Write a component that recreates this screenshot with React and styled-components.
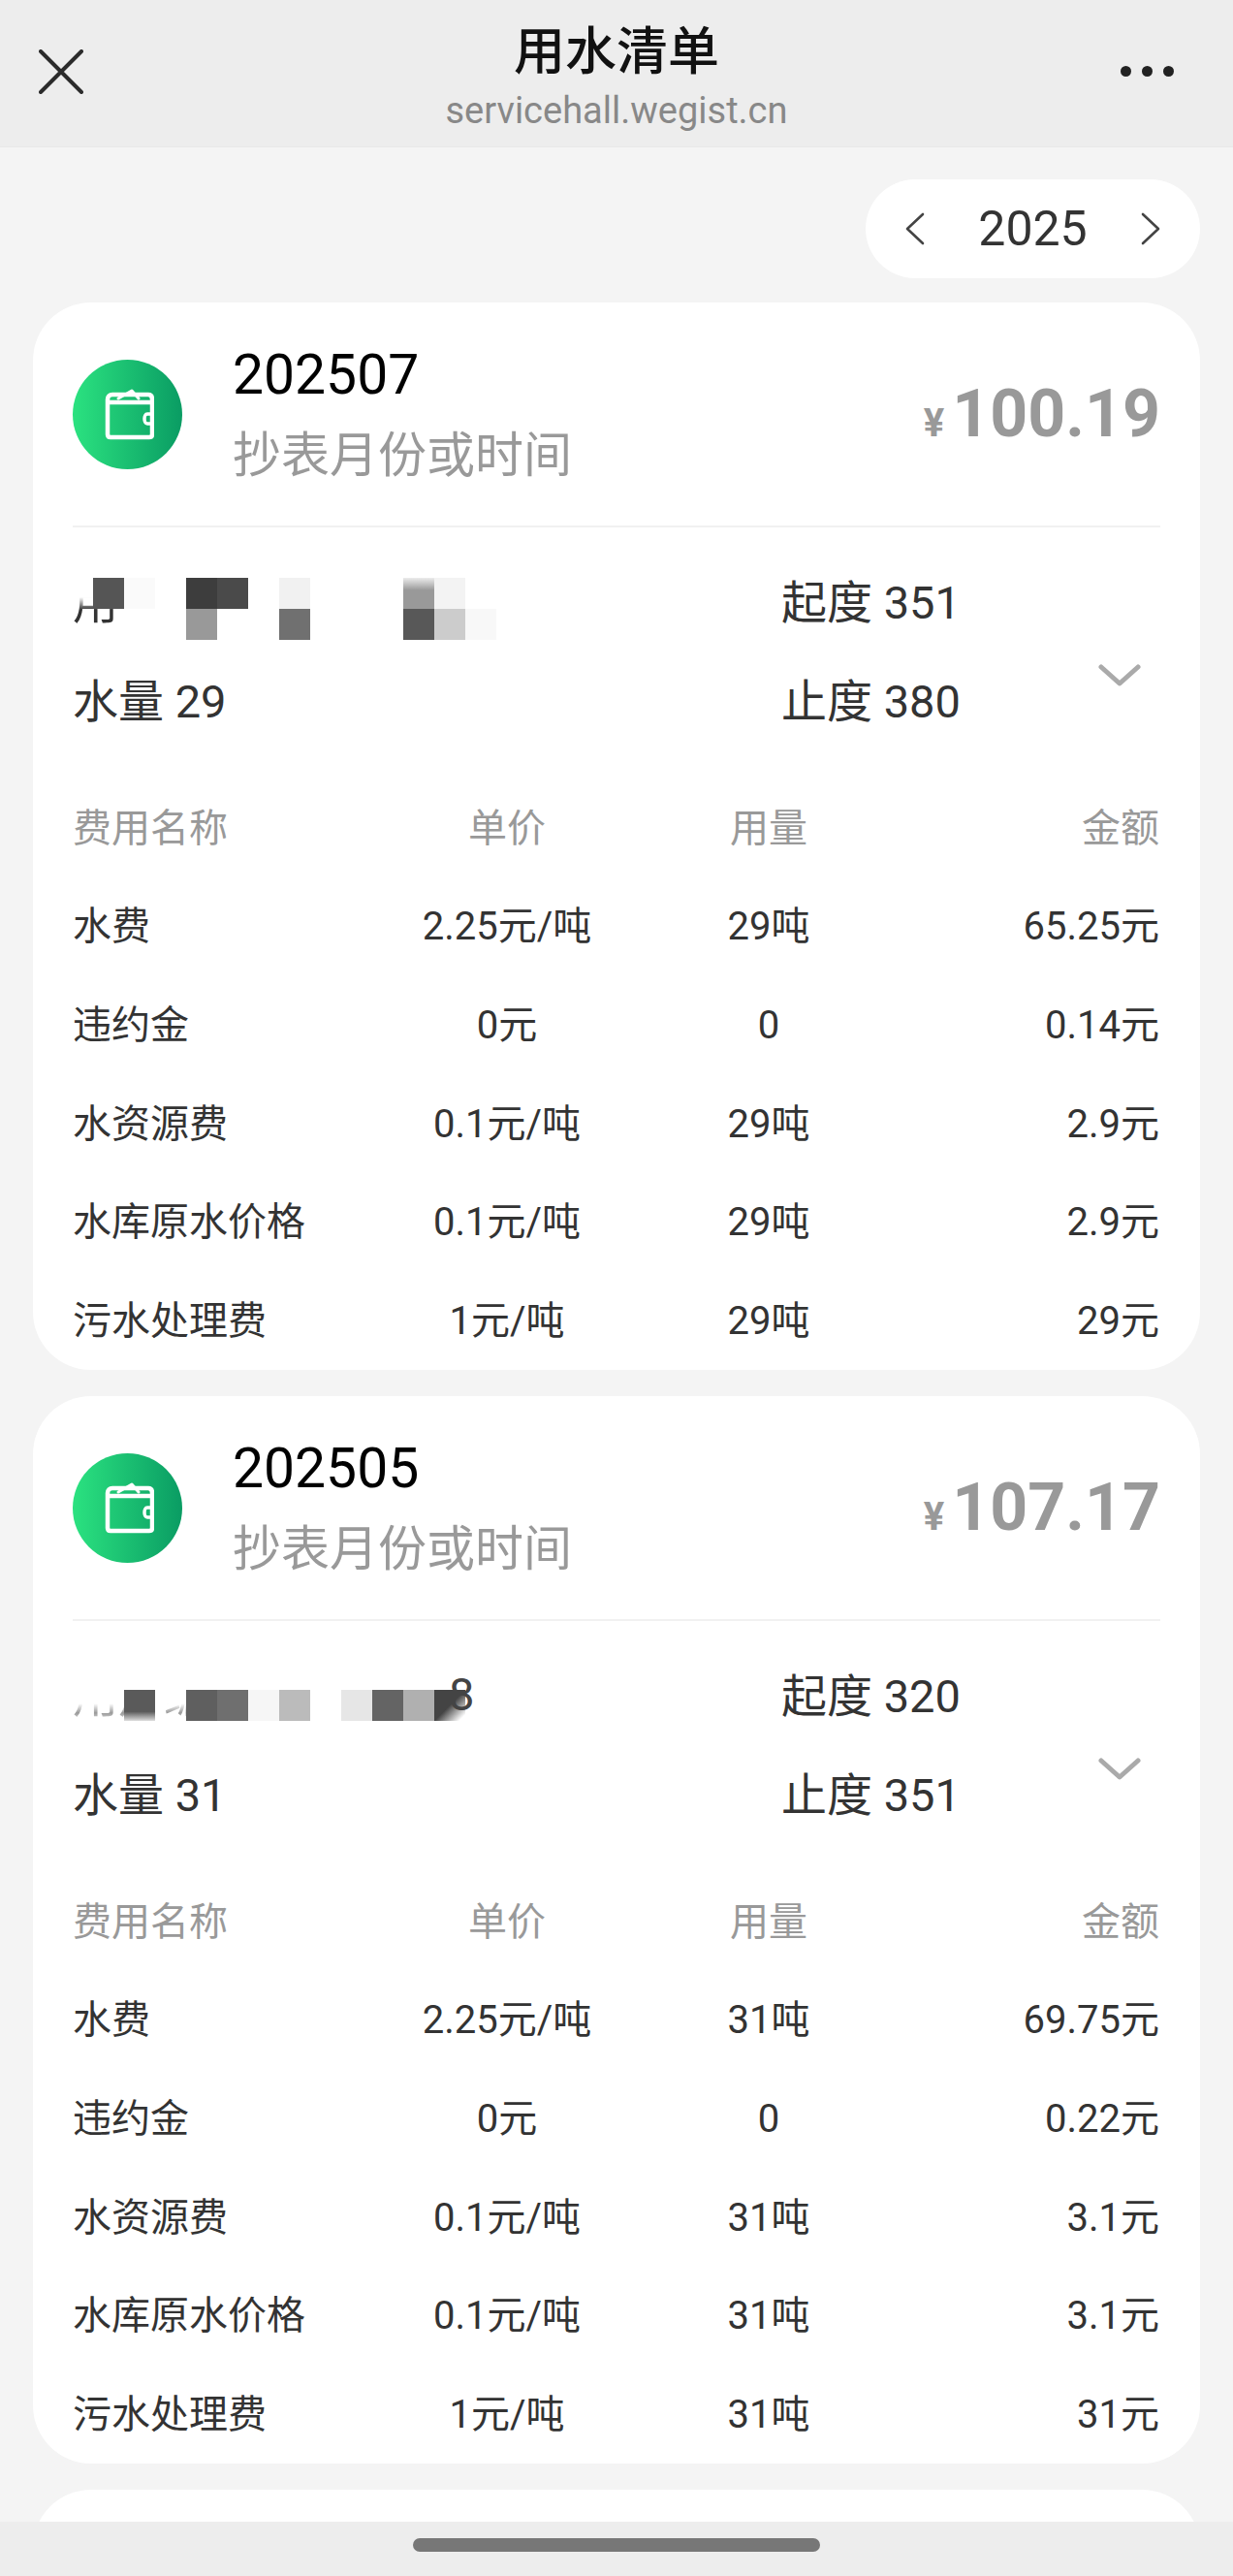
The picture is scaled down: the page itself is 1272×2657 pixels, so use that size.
import styled, { createGlobalStyle } from 'styled-components';

const GlobalStyle = createGlobalStyle`
  html, body {
    margin: 0;
    padding: 0;
    background: #f4f4f4;
  }
`;

const bills = [
  {
    month: '202507',
    total: '100.19',
    water: 29,
    start: 351,
    end: 380,
    cover: 'top',
    trail: '',
    cells: [
      '#555', '#fafafa', '', '#3d3d3d', '#4a4a4a', '', '#f1f1f1', '', '', '', 'linear-gradient(#ececec, #999 40%)', '#f3f3f3', '',
      '', '', '', '#999', '', '', '#707070', '', '', '', '#585858', '#ccc', '#f8f8f8',
    ],
    rows: [
      ['水费', '2.25元/吨', '29吨', '65.25元'],
      ['违约金', '0元', '0', '0.14元'],
      ['水资源费', '0.1元/吨', '29吨', '2.9元'],
      ['水库原水价格', '0.1元/吨', '29吨', '2.9元'],
      ['污水处理费', '1元/吨', '29吨', '29元'],
    ],
  },
  {
    month: '202505',
    total: '107.17',
    water: 31,
    start: 320,
    end: 351,
    cover: 'bottom',
    trail: '8',
    cells: [
      '', 'linear-gradient(#5a5a5a 70%, #ddd)', '', '#5f5f5f', '#6f6f6f', '#f6f6f6', '#bbb', '', '#e6e6e6', '#646464', '#b0b0b0', 'linear-gradient(135deg, #444 50%, #fff 90%)', '',
    ],
    rows: [
      ['水费', '2.25元/吨', '31吨', '69.75元'],
      ['违约金', '0元', '0', '0.22元'],
      ['水资源费', '0.1元/吨', '31吨', '3.1元'],
      ['水库原水价格', '0.1元/吨', '31吨', '3.1元'],
      ['污水处理费', '1元/吨', '31吨', '31元'],
    ],
  },
];

function CloseIcon() {
  return (
    <svg width="46" height="46" viewBox="0 0 46 46" fill="none" stroke="#2b2b2b" strokeWidth="4" strokeLinecap="round">
      <path d="M2 2 L44 44 M44 2 L2 44" />
    </svg>
  );
}

function WalletIcon() {
  return (
    <svg width="54" height="54" viewBox="-2 0 54 54" fill="none" stroke="#fff" strokeWidth="4.5" strokeLinejoin="round" strokeLinecap="round">
      <path d="M4 12 C4 9 6 7 9 7 L46 7 C49 7 50 9 50 12 L50 48 C50 50 49 51 47 51 L7 51 C5 51 4 50 4 48 Z" />
      <path d="M5 15 L50 15" />
      <path d="M15 11 L29 3 L36 11" strokeWidth="3" />
      <path d="M50 27 L45 27 C41 27 41 37 45 37 L50 37" strokeWidth="3.5" />
    </svg>
  );
}

// year arrows are tall and thin, no icon in the packages has that shape
function YearArrow({ dir }) {
  return (
    <svg width="22" height="34" viewBox="0 0 22 34" fill="none" stroke="#444" strokeWidth="2.6" strokeLinecap="round" strokeLinejoin="round">
      <path d={dir === 'left' ? 'M19 2 L3 17 L19 32' : 'M3 2 L19 17 L3 32'} />
    </svg>
  );
}

function ExpandArrow() {
  return (
    <svg width="44" height="26" viewBox="0 0 44 26" fill="none" stroke="#aaa" strokeWidth="5" strokeLinecap="round" strokeLinejoin="round">
      <path d="M3 4 L22 21 L41 4" />
    </svg>
  );
}

export default function App() {
  return (
    <Page>
      <GlobalStyle />
      <NavBar>
        <NavClose><CloseIcon /></NavClose>
        <NavTitle>用水清单</NavTitle>
        <NavHost>servicehall.wegist.cn</NavHost>
        <NavMore><Dot /><Dot /><Dot /></NavMore>
      </NavBar>

      <YearRow>
        <YearPill>
          <YearArrow dir="left" />
          <YearText>2025</YearText>
          <YearArrow dir="right" />
        </YearPill>
      </YearRow>

      <CardList>
        {bills.map((bill) => (
          <Card key={bill.month}>
            <CardHead>
              <IconCircle><WalletIcon /></IconCircle>
              <HeadText>
                <Month>{bill.month}</Month>
                <MonthLabel>抄表月份或时间</MonthLabel>
              </HeadText>
              <Total>
                <Yen>¥</Yen>
                {bill.total}
              </Total>
            </CardHead>

            <Meter>
              <MeterCell>
                <Hidden $cover={bill.cover}>{bill.cover === 'top' ? '用' : '用户编号'}</Hidden>
                <Mosaic $cover={bill.cover}>
                  {bill.cells.map((c, i) => <MosaicCell key={i} $c={c} />)}
                </Mosaic>
                {bill.trail && <Trail>{bill.trail}</Trail>}
              </MeterCell>
              <MeterCell>起度 {bill.start}</MeterCell>
              <MeterCell>水量 {bill.water}</MeterCell>
              <MeterCell>止度 {bill.end}</MeterCell>
              <Expand><ExpandArrow /></Expand>
            </Meter>

            <FeeTable>
              <FeeHead>费用名称</FeeHead>
              <FeeHead $center>单价</FeeHead>
              <FeeHead $center>用量</FeeHead>
              <FeeHead $right>金额</FeeHead>
              {bill.rows.map((r) => (
                <FeeRow key={r[0]}>
                  <FeeCell>{r[0]}</FeeCell>
                  <FeeCell $center>{r[1]}</FeeCell>
                  <FeeCell $center>{r[2]}</FeeCell>
                  <FeeCell $right>{r[3]}</FeeCell>
                </FeeRow>
              ))}
            </FeeTable>
          </Card>
        ))}
        <Card />
      </CardList>

      <HomeBar>
        <HomeHandle />
      </HomeBar>
    </Page>
  );
}

const Page = styled.div`
  position: relative;
  width: 1272px;
  height: 2657px;
  overflow: hidden;
  background: #f4f4f4;
  font-family: Roboto, 'Noto Sans CJK SC', sans-serif;
  color: #333;
`;
const NavBar = styled.header`
  position: relative;
  height: 152px;
  background: #ededed;
  border-bottom: 1px solid #e8e8e8;
  box-sizing: border-box;
  text-align: center;
`;
const NavClose = styled.div`
  position: absolute;
  left: 40px;
  top: 51px;
  line-height: 0;
`;
const NavTitle = styled.div`
  padding-top: 22px;
  font-size: 53px;
  line-height: 64px;
  font-weight: 500;
  color: #111;
`;
const NavHost = styled.div`
  margin-top: 6px;
  font-size: 38px;
  line-height: 44px;
  color: #888;
`;
const NavMore = styled.div`
  position: absolute;
  right: 61px;
  top: 68px;
  display: flex;
  gap: 11px;
`;
const Dot = styled.span`
  width: 11px;
  height: 11px;
  border-radius: 50%;
  background: #222;
`;
const YearRow = styled.div`
  display: flex;
  justify-content: flex-end;
  padding: 33px 34px 25px 0;
`;
const YearPill = styled.div`
  width: 345px;
  height: 102px;
  box-sizing: border-box;
  padding: 0 40px;
  display: flex;
  align-items: center;
  justify-content: space-between;
  background: #fff;
  border-radius: 51px;
`;
const YearText = styled.span`
  font-size: 50px;
  line-height: 60px;
  color: #333;
`;
const CardList = styled.div`
  display: flex;
  flex-direction: column;
  gap: 27px;
  padding: 0 34px;
`;
const Card = styled.section`
  height: 1101px;
  flex: none;
  box-sizing: border-box;
  padding: 0 41px;
  background: #fff;
  border-radius: 60px;
`;
const CardHead = styled.div`
  height: 232px;
  box-sizing: border-box;
  display: flex;
  align-items: center;
  border-bottom: 2px solid #f1f1f1;
`;
const IconCircle = styled.div`
  flex: none;
  width: 113px;
  height: 113px;
  display: flex;
  align-items: center;
  justify-content: center;
  border-radius: 50%;
  background: linear-gradient(90deg, #2be280, #0a9c63);
`;
const HeadText = styled.div`
  flex: 1;
  margin-left: 52px;
`;
const Month = styled.div`
  font-size: 57px;
  line-height: 66px;
  color: #000;
`;
const MonthLabel = styled.div`
  margin-top: 19px;
  font-size: 50px;
  line-height: 62px;
  color: #999;
`;
const Total = styled.div`
  padding-top: 10px;
  font-size: 68px;
  line-height: 80px;
  font-weight: 700;
  color: #999;
`;
const Yen = styled.span`
  margin-right: 8px;
  font-size: 40px;
`;
const Meter = styled.div`
  position: relative;
  display: grid;
  grid-template-columns: 731px 1fr;
  grid-auto-rows: 102px;
  padding-top: 27px;
  height: 260px;
  box-sizing: border-box;
`;
const MeterCell = styled.div`
  position: relative;
  display: flex;
  align-items: center;
  font-size: 47px;
  line-height: 60px;
  color: #333;
`;
const Hidden = styled.span`
  color: ${(p) => (p.$cover === 'top' ? '#333' : '#999')};
  white-space: nowrap;
  mask-image: linear-gradient(
    ${(p) => (p.$cover === 'top' ? '#0000 40%, #000 62%' : '#0000 62%, #000 78%, #0000 96%')}
  );
`;
const Mosaic = styled.div`
  position: absolute;
  left: 21px;
  top: ${(p) => (p.$cover === 'top' ? '25px' : '44px')};
  display: grid;
  grid-template-columns: repeat(13, 32px);
  grid-auto-rows: 32px;
`;
const MosaicCell = styled.span`
  background: ${(p) => p.$c || 'transparent'};
`;
const Trail = styled.span`
  position: absolute;
  left: 388px;
  top: 19px;
  color: #444;
`;
const Expand = styled.div`
  position: absolute;
  right: 20px;
  top: 140px;
  line-height: 0;
`;
const FeeTable = styled.div`
  display: grid;
  grid-template-columns: 300px 296px 244px 1fr;
  grid-auto-rows: 101.6px;
  align-items: center;
  padding-right: 1px;
  font-size: 40px;
  line-height: 50px;
`;
const FeeRow = styled.div`
  display: contents;
`;
const FeeCell = styled.div`
  color: #333;
  white-space: nowrap;
  text-align: ${(p) => (p.$right ? 'right' : p.$center ? 'center' : 'left')};
`;
const FeeHead = styled(FeeCell)`
  color: #999;
`;
const HomeBar = styled.div`
  position: absolute;
  left: 0;
  right: 0;
  bottom: 0;
  height: 56px;
  background: #ededed;
`;
const HomeHandle = styled.div`
  width: 420px;
  height: 14px;
  margin: 17px auto 0;
  border-radius: 7px;
  background: #777;
`;
